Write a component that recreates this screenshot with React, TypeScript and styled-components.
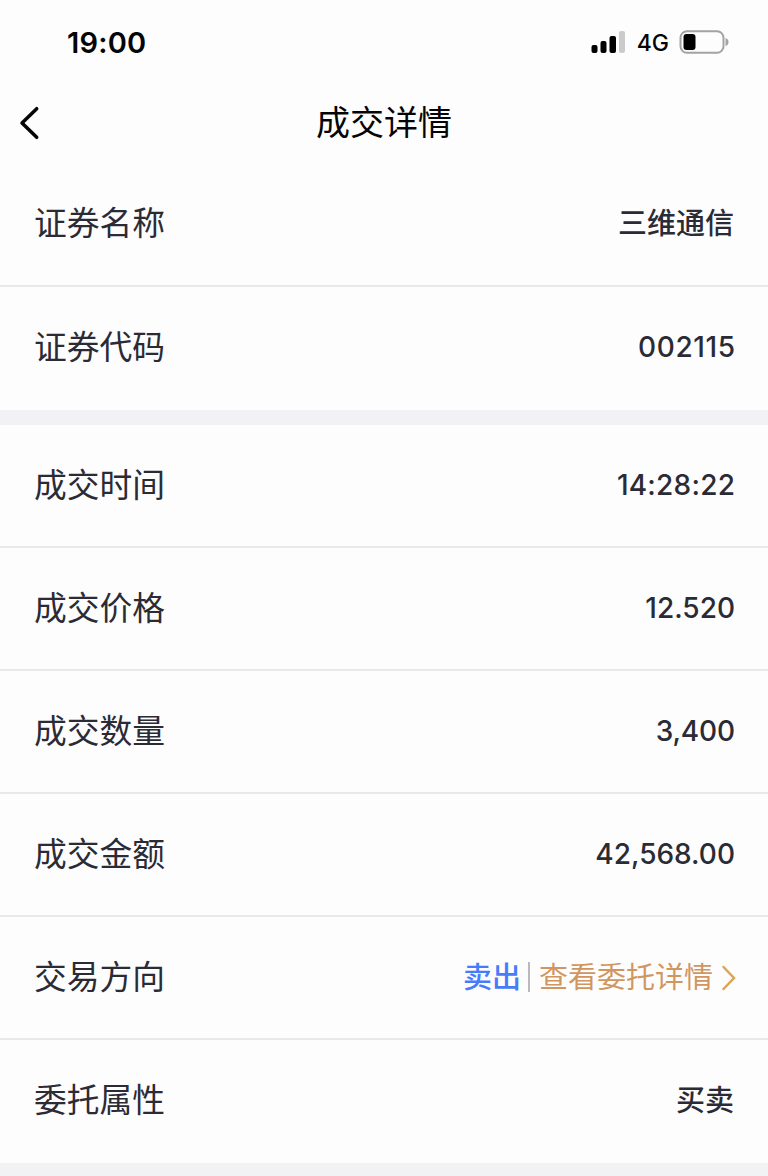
import React from 'react';
import styled, { createGlobalStyle } from 'styled-components';

const GlobalStyle = createGlobalStyle`
  * { box-sizing: border-box; }
  body { margin: 0; background: #fdfdfe; }
`;

const Screen = styled.main`
  width: 768px;
  height: 1176px;
  overflow: hidden;
  background: #fdfdfe;
  color: #2b2b35;
  font-family: Inter, "Noto Sans CJK SC", sans-serif;
`;

const StatusBar = styled.header`
  display: flex;
  justify-content: space-between;
  align-items: center;
  height: 84px;
  padding: 0 39px 0 67px;
  color: #050507;
`;

const Clock = styled.span`
  padding-top: 1px;
  font-size: 29px;
  font-weight: 600;
  line-height: 34px;
  letter-spacing: 0.2px;
`;

const StatusIcons = styled.div`
  display: flex;
  align-items: center;
`;

const Network = styled.span`
  margin: 2px 10px 0 11px;
  font-size: 23px;
  font-weight: 500;
  line-height: 28px;
`;

const TitleBar = styled.nav`
  display: grid;
  grid-template-columns: 60px 1fr 60px;
  align-items: center;
  height: 78px;
  color: #050507;
`;

const BackButton = styled.button`
  display: flex;
  padding: 0 0 1px 18px;
  border: 0;
  background: none;
  color: inherit;
`;

const Title = styled.h1`
  margin: 0;
  padding-bottom: 1px;
  text-align: center;
  font-size: 34px;
  font-weight: 400;
  line-height: 48px;
`;

const Group = styled.section`
  border-bottom: 15px solid #f2f2f5;
`;

const Row = styled.div<{ $height?: number }>`
  display: flex;
  justify-content: space-between;
  align-items: center;
  height: ${({ $height = 123 }) => $height}px;
  padding: 0 33px 1px 34px;
  border-bottom: 2px solid #e9e9ec;
  &:last-child { border-bottom-color: transparent; padding-bottom: 1px; }
`;

const Label = styled.span`
  font-size: 32.75px;
  line-height: 48px;
`;

const Value = styled.span<{ $cjk?: boolean; $tracking?: number }>`
  margin-right: ${({ $cjk, $tracking = 0 }) => ($cjk ? 1 : -$tracking)}px;
  padding-top: ${({ $cjk }) => ($cjk ? 2 : 0)}px;
  font-size: ${({ $cjk }) => ($cjk ? 29 : 28)}px;
  font-weight: 500;
  line-height: 42px;
  letter-spacing: ${({ $tracking = 0 }) => $tracking}px;
`;

const Direction = styled.div`
  display: flex;
  align-items: center;
  margin-right: -2px;
`;

const Side = styled(Value)`
  margin-right: 0;
  color: #477bfa;
`;

const Divider = styled.span`
  width: 2px;
  height: 30px;
  margin: 0 9px 0 7px;
  background: #b9b9be;
`;

const OrderLink = styled.span`
  padding-top: 2px;
  color: #d1965f;
  font-size: 29px;
  line-height: 42px;
`;

const trade = [
  { label: '成交时间', value: '14:28:22', tracking: 0.25 },
  { label: '成交价格', value: '12.520' },
  { label: '成交数量', value: '3,400', tracking: -0.15 },
  { label: '成交金额', value: '42,568.00' },
];

export default function App() {
  return (
    <Screen>
      <GlobalStyle />
      <StatusBar>
        <Clock>19:00</Clock>
        <StatusIcons>
          <svg width="35" height="22" viewBox="0 0 35 22">
            <rect x="0.5" y="14" width="6" height="8" rx="2" />
            <rect x="9.5" y="10" width="6" height="12" rx="2" />
            <rect x="18.5" y="5" width="6.5" height="17" rx="2" />
            <rect x="28" y="0" width="6" height="22" rx="2" fill="#cbcbcc" />
          </svg>
          <Network>4G</Network>
          <svg width="50" height="24" viewBox="0 0 50 24">
            <rect x="1.5" y="1.2" width="43" height="21.6" rx="6.5" fill="none" stroke="#a3a3a6" strokeWidth="2" />
            <rect x="4.5" y="4" width="12" height="16" rx="3" />
            <path d="M46.5 8q3 1 3 4t-3 4z" fill="#a3a3a6" />
          </svg>
        </StatusIcons>
      </StatusBar>
      <TitleBar>
        <BackButton aria-label="返回">
          <svg width="24" height="34" viewBox="0 0 24 34">
            <path d="M18.7 2.7 4 17 18.7 31.3" fill="none" stroke="currentColor" strokeWidth="3.5" strokeLinecap="round" strokeLinejoin="round" />
          </svg>
        </BackButton>
        <Title>成交详情</Title>
      </TitleBar>
      <Group>
        <Row $height={125}>
          <Label>证券名称</Label>
          <Value $cjk>三维通信</Value>
        </Row>
        <Row>
          <Label>证券代码</Label>
          <Value $tracking={0.6}>002115</Value>
        </Row>
      </Group>
      <Group>
        {trade.map(({ label, value, tracking }) => (
          <Row key={label}>
            <Label>{label}</Label>
            <Value $tracking={tracking}>{value}</Value>
          </Row>
        ))}
        <Row>
          <Label>交易方向</Label>
          <Direction>
            <Side $cjk>卖出</Side>
            <Divider />
            <OrderLink>查看委托详情</OrderLink>
            <svg width="24" height="28" viewBox="0 0 24 28">
              <path d="M10.5 4 21 15 10.5 26" fill="none" stroke="#dba553" strokeWidth="2.5" strokeLinecap="round" />
            </svg>
          </Direction>
        </Row>
        <Row>
          <Label>委托属性</Label>
          <Value $cjk>买卖</Value>
        </Row>
      </Group>
    </Screen>
  );
}
